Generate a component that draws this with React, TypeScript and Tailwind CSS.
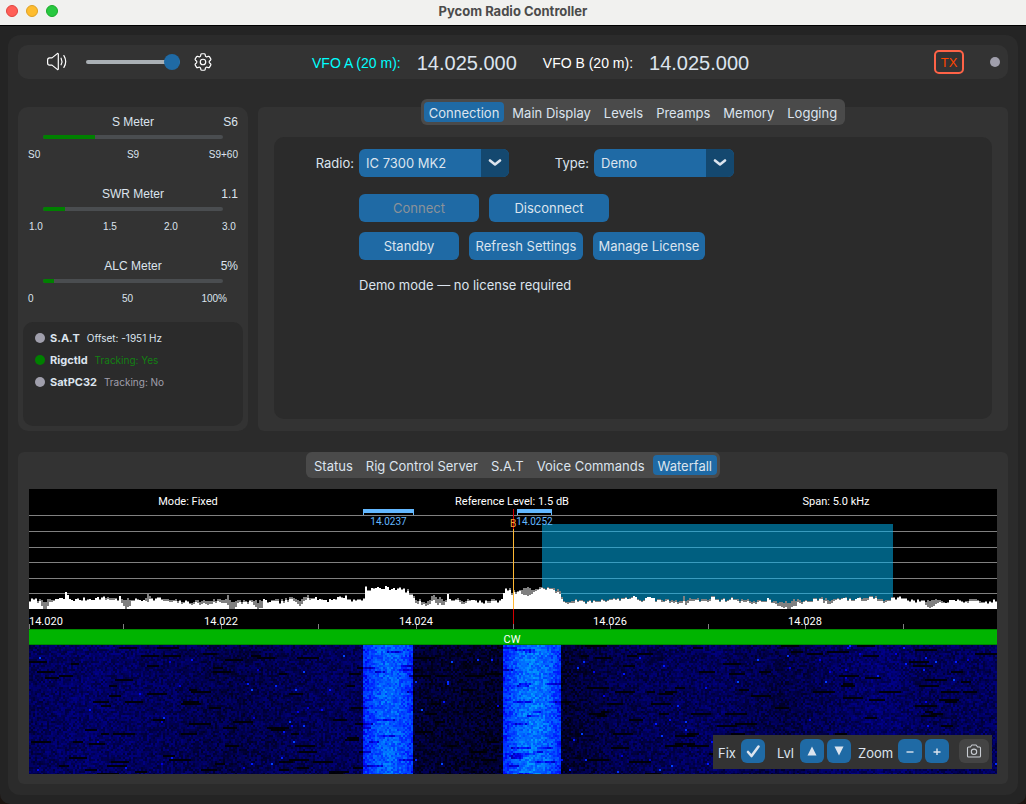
import { useEffect, useRef, useState } from "react";
import { HiOutlineCog6Tooth } from "react-icons/hi2";

const SCOPE_WIDTH = 968;
const WATERFALL_HEIGHT = 129;
const BASELINE = 120;

// [x, level, peak hold]
const TRACE: [number, number, number][] = [
  [0, 8, 9], [6, 9, 10], [11, 6, 9], [13, 0, 9], [17, 0, 8], [20, 5, 8], [26, 10, 10], [34, 10, 10],
  [36, 17, 17], [39, 11, 11], [41, 9, 9], [54, 9, 10], [71, 11, 11], [78, 10, 12], [88, 9, 10],
  [90, 14, 14], [92, 5, 9], [96, 0, 9], [99, 0, 9], [102, 9, 10], [115, 9, 9], [118, 9, 18], [121, 9, 10],
  [130, 10, 11], [138, 7, 9], [161, 6, 7], [178, 5, 9], [188, 7, 9], [197, 6, 10], [198, 5, 15],
  [201, 0, 8], [206, 1, 7], [209, 6, 8], [221, 7, 8], [227, 0, 8], [232, 1, 8], [234, 8, 8],
  [251, 6, 8], [262, 9, 11], [270, 4, 9], [274, 10, 14], [284, 10, 11], [298, 9, 9], [315, 12, 13],
  [321, 8, 9], [332, 9, 10], [334, 11, 12], [335, 22, 23], [338, 19, 20], [348, 21, 21], [361, 21, 21],
  [374, 19, 20], [382, 14, 16], [385, 7, 10], [391, 6, 8], [398, 4, 8], [403, 8, 13], [412, 4, 10],
  [417, 8, 9], [418, 14, 14], [421, 9, 9], [432, 6, 9], [444, 8, 8], [457, 6, 8], [473, 9, 9],
  [475, 20, 20], [479, 18, 20], [483, 15, 17], [490, 17, 18], [493, 14, 20], [498, 12, 21],
  [503, 17, 20], [511, 20, 21], [521, 20, 21], [524, 18, 20], [531, 14, 17], [533, 7, 8], [543, 6, 8],
  [547, 9, 10], [552, 6, 7], [568, 8, 9], [594, 10, 11], [604, 12, 12], [611, 8, 9], [618, 11, 11],
  [628, 8, 9], [641, 7, 9], [652, 7, 9], [653, 7, 12], [656, 6, 10], [665, 9, 10], [674, 7, 9],
  [684, 11, 12], [690, 8, 9], [704, 10, 11], [713, 7, 9], [728, 6, 8], [738, 9, 9], [747, 4, 7],
  [756, 0, 6], [763, 1, 8], [768, 6, 9], [776, 7, 8], [789, 10, 11], [799, 5, 9], [807, 9, 10],
  [813, 12, 12], [821, 8, 9], [828, 11, 11], [835, 8, 11], [841, 12, 13], [854, 8, 10], [864, 10, 11],
  [873, 11, 12], [881, 8, 9], [894, 7, 8], [899, 0, 8], [905, 2, 8], [909, 6, 8], [920, 8, 8],
  [941, 7, 9], [954, 6, 7], [968, 8, 9],
];

// [x, noise floor]
const FLOOR: [number, number][] = [
  [0, 0.34], [60, 0.4], [150, 0.34], [200, 0.28], [290, 0.34], [334, 0.34], [384, 0.2], [475, 0.17],
  [532, 0.18], [590, 0.31], [690, 0.36], [750, 0.27], [800, 0.34], [850, 0.42], [900, 0.34], [968, 0.36],
];

const GRID_LINES = [26, 42, 58, 73, 89, 104];

const TICKS = [
  { x: 0, label: "14.020" },
  { x: 94 },
  { x: 192, label: "14.022" },
  { x: 289 },
  { x: 387, label: "14.024" },
  { x: 484 },
  { x: 581, label: "14.026" },
  { x: 679 },
  { x: 776, label: "14.028" },
  { x: 874 },
];

const SIGNALS = [
  { x: 334, width: 51, label: "14.0237" },
  { x: 488, width: 35, label: "14.0252" },
];

function createRandom(seed: number) {
  let state = seed;
  return () => {
    state = (state * 1664525 + 1013904223) >>> 0;
    return state / 4294967296;
  };
}

function buildTrace(column: 1 | 2) {
  const random = createRandom(7);
  let path = `M0 ${BASELINE}`;
  let i = 0;
  for (let x = 0; x < SCOPE_WIDTH; x += 2) {
    while (i < TRACE.length - 2 && TRACE[i + 1][0] <= x) i++;
    const from = TRACE[i];
    const to = TRACE[i + 1];
    const ratio = (x - from[0]) / (to[0] - from[0]);
    const level = from[column] + (to[column] - from[column]) * ratio;
    const height = Math.max(0, Math.round(level + (random() - 0.5) * 3.4));
    path += `V${BASELINE - height}H${x + 2}`;
  }
  return `${path}V${BASELINE}Z`;
}

const LIVE_PATH = buildTrace(1);
const PEAK_PATH = buildTrace(2);

function floorLevel(x: number) {
  const i = Math.max(1, FLOOR.findIndex((point) => point[0] > x));
  const from = FLOOR[i - 1];
  const to = FLOOR[i];
  return from[1] + ((to[1] - from[1]) * (x - from[0])) / (to[0] - from[0]);
}

function signalLevel(x: number) {
  if (x >= 334 && x < 384) return 1.04 + 0.27 * Math.sin(((x - 334) / 50) * Math.PI);
  if (x >= 474 && x < 532) return 1.04 + 0.36 * Math.sin(((x - 474) / 58) * Math.PI);
  return 0;
}

function Waterfall() {
  const canvasRef = useRef<HTMLCanvasElement>(null);

  useEffect(() => {
    const context = canvasRef.current?.getContext("2d");
    if (!context) return;
    const random = createRandom(42);
    for (let y = 0; y < WATERFALL_HEIGHT; y += 2) {
      let fade = 0;
      for (let x = 0; x < SCOPE_WIDTH; x += 2) {
        const signal = signalLevel(x);
        if (fade > 0) fade--;
        else if (random() < 0.007) fade = 4 + Math.floor(random() * 8);
        let level = signal ? signal + (random() - 0.5) * 0.36 : floorLevel(x) + (random() - 0.5) * 0.3;
        if (!signal && random() < 0.004) level = 0.8 + random() * 0.4;
        if (fade > 0) level = signal ? level - 0.35 : level * 0.1;
        const blue = Math.max(0, Math.min(255, Math.round(level * 255)));
        const green = Math.max(0, Math.min(220, Math.round((level - 0.9) * 240)));
        context.fillStyle = `rgb(0, ${green}, ${blue})`;
        context.fillRect(x, y, 2, 2);
      }
    }
  }, []);

  return (
    <canvas
      ref={canvasRef}
      width={SCOPE_WIDTH}
      height={WATERFALL_HEIGHT}
      className="block w-full [image-rendering:pixelated]"
    />
  );
}

function Scope() {
  return (
    <svg viewBox="0 0 968 156" className="block w-full bg-black font-['Roboto',sans-serif]" shapeRendering="crispEdges">
      {GRID_LINES.map((y) => (
        <rect key={y} x="0" y={y} width="968" height="1" fill="#808080" />
      ))}
      <rect x="513" y="35" width="351" height="85" fill="#005f80" />
      {GRID_LINES.slice(1).map((y) => (
        <rect key={y} x="513" y={y} width="351" height="1" fill="#3a9cbf" />
      ))}
      <path d={PEAK_PATH} fill="#808080" />
      <path d={LIVE_PATH} fill="#ffffff" />

      <rect x="484" y="20" width="1" height="120" fill="#d40000" />
      <rect x="484" y="40" width="1" height="80" fill="#ffb733" />
      {SIGNALS.map((signal) => (
        <g key={signal.label}>
          <rect x={signal.x} y="20" width={signal.width} height="7" fill="#63b8ff" />
          <rect x={signal.x + 1} y="24" width={signal.width - 2} height="3" fill="#000000" />
          <rect x={signal.x} y="26" width={signal.width} height="1" fill="#808080" />
          <text x={signal.x + signal.width / 2} y="36" textAnchor="middle" fontSize="10" fill="#63b8ff">
            {signal.label}
          </text>
        </g>
      ))}
      <text x="484" y="38" textAnchor="middle" fontSize="10" fill="#ffa033">B</text>

      <g fontSize="11" fill="#ffffff" textAnchor="middle">
        <text x="159" y="16">Mode: Fixed</text>
        <text x="483" y="16">Reference Level: 1.5 dB</text>
        <text x="807" y="16">Span: 5.0 kHz</text>
      </g>

      {TICKS.map((tick) => (
        <g key={tick.x}>
          <rect x={tick.x} y="135" width="1" height="5" fill="#808080" />
          {tick.label && (
            <text
              x={tick.x}
              y="136"
              textAnchor={tick.x === 0 ? "start" : "middle"}
              fontSize="11"
              fill="#ffffff"
            >
              {tick.label}
            </text>
          )}
        </g>
      ))}

      <rect x="0" y="140" width="968" height="16" fill="#008a00" />
      <rect x="0" y="141" width="968" height="14" fill="#00b400" />
      <text x="483" y="154" textAnchor="middle" fontSize="11" fill="#ffffff">CW</text>
    </svg>
  );
}

function SpeakerIcon() {
  return (
    <svg
      width="22"
      height="22"
      viewBox="0 0 22 22"
      fill="none"
      stroke="#ffffff"
      strokeWidth="1.2"
      strokeLinecap="round"
      strokeLinejoin="round"
      className="mr-[18px]"
    >
      <path d="M3.6 6.9H6L11.3 2.6C11.7 2.3 12.3 2.5 12.3 3.1V17.9C12.3 18.5 11.7 18.7 11.3 18.4L6 14.1H3.6C2.4 14.1 1.6 13.2 1.6 12V9C1.6 7.8 2.4 6.9 3.6 6.9Z" />
      <path d="M15.1 7.2Q16.8 10.5 15.1 13.8" />
      <path d="M17.9 4.6Q21.5 10.5 17.9 16.4" />
    </svg>
  );
}

function CameraIcon() {
  return (
    <svg
      width="16"
      height="16"
      viewBox="0 0 16 16"
      fill="none"
      stroke="#c9cdd3"
      strokeWidth="1.1"
      strokeLinejoin="round"
    >
      <path d="M2.5 4H4.4L5.9 2H10.1L11.6 4H13.5C14.1 4 14.5 4.4 14.5 5V13C14.5 13.6 14.1 14 13.5 14H2.5C1.9 14 1.5 13.6 1.5 13V5C1.5 4.4 1.9 4 2.5 4Z" />
      <circle cx="8" cy="8.8" r="2.7" />
    </svg>
  );
}

interface TabBarProps {
  label: string;
  tabs: string[];
  initial: string;
}

function TabBar({ label, tabs, initial }: TabBarProps) {
  const [active, setActive] = useState(initial);
  return (
    <div role="tablist" aria-label={label} className="mx-auto -mt-2 flex w-fit gap-[3px] rounded-md bg-[#4a4a4a] p-[3px]">
      {tabs.map((tab) => (
        <button
          key={tab}
          type="button"
          role="tab"
          aria-selected={tab === active}
          onClick={() => setActive(tab)}
          className={`h-5 rounded px-[5px] pt-[2px] text-[13px] leading-[18px] ${tab === active ? "bg-[#1f6aa5]" : ""}`}
        >
          {tab}
        </button>
      ))}
    </div>
  );
}

interface MeterProps {
  title: string;
  value: string;
  percent: number;
  scale: string[];
  scaleClass: string;
}

function Meter({ title, value, percent, scale, scaleClass }: MeterProps) {
  return (
    <div className="font-['Liberation_Sans',sans-serif]">
      <div className="grid grid-cols-[1fr_auto_1fr] px-[10px] text-xs leading-4">
        <span />
        <span>{title}</span>
        <span className="text-right">{value}</span>
      </div>
      <div className="mx-[25px] mt-[5px] h-1 overflow-hidden rounded-sm bg-[#4a4d50]">
        <div className="h-full bg-[#008000]" style={{ width: `${percent}%` }} />
      </div>
      <div className={`mt-[10px] grid text-[10px] leading-3 ${scaleClass}`}>
        {scale.map((mark) => (
          <span key={mark}>{mark}</span>
        ))}
      </div>
    </div>
  );
}

interface ServiceProps {
  name: string;
  detail: string;
  dotClass: string;
  detailClass: string;
}

function Service({ name, detail, dotClass, detailClass }: ServiceProps) {
  return (
    <li className="flex h-[22px] items-center">
      <span className={`mr-[5px] h-[10px] w-[10px] rounded-full ${dotClass}`} />
      <span className="mr-[7px] text-[11px] font-bold">{name}</span>
      <span className={`text-[10px] ${detailClass}`}>{detail}</span>
    </li>
  );
}

interface ComboProps {
  id: string;
  options: string[];
  widthClass: string;
}

function Combo({ id, options, widthClass }: ComboProps) {
  return (
    <div className={`relative ${widthClass}`}>
      <select id={id} className="block h-7 w-full appearance-none rounded-md bg-[#1f6aa5] pl-[7px] pr-8 pt-[2px] text-[13px]">
        {options.map((option) => (
          <option key={option}>{option}</option>
        ))}
      </select>
      <span className="pointer-events-none absolute inset-y-0 right-0 flex w-7 items-center justify-center rounded-r-md bg-[#14486f]">
        <svg width="14" height="8" viewBox="0 0 14 8" fill="none" stroke="#dce4ee" strokeWidth="2.6" strokeLinecap="round" strokeLinejoin="round">
          <path d="M2 1.5L7 5.5L12 1.5" />
        </svg>
      </span>
    </div>
  );
}

const actionButton = "h-7 rounded-md bg-[#1f6aa5] pt-[2px] text-[13px]";
const toolButton = "flex h-6 w-6 items-center justify-center rounded-md bg-[#1f6aa5]";

export default function App() {
  const [volume, setVolume] = useState(100);
  const [fixed, setFixed] = useState(true);

  return (
    <div className="min-h-screen bg-[#1c1511] font-['Inter',sans-serif] text-[#dce4ee]">
      <div className="flex min-h-screen flex-col rounded-b-[10px] bg-[#242424]">
        <header className="relative flex h-[26px] items-center justify-center border-b border-black bg-[#f1f1ef]">
          <div className="absolute left-[6px] top-[5px] flex gap-2">
            <span className="h-3 w-3 rounded-full border border-[#e0443e] bg-[#ff5f57]" />
            <span className="h-3 w-3 rounded-full border border-[#dea123] bg-[#febc2e]" />
            <span className="h-3 w-3 rounded-full border border-[#1aab29] bg-[#28c840]" />
          </div>
          <h1 className="mb-1 text-[13px] font-bold leading-4 text-[#4b4b4b]">Pycom Radio Controller</h1>
        </header>

        <main className="mx-2 mb-[9px] mt-[9px] flex-1 rounded-xl bg-[#2b2b2b] p-[10px]">
          <section className="flex h-[34px] items-center rounded-[10px] bg-[#333333] pl-7 pr-2">
            <SpeakerIcon />
            <input
              type="range"
              aria-label="Volume"
              value={volume}
              onChange={(e) => setVolume(Number(e.target.value))}
              className="h-4 w-[94px] appearance-none bg-transparent [&::-webkit-slider-runnable-track]:h-1 [&::-webkit-slider-runnable-track]:rounded-full [&::-webkit-slider-runnable-track]:bg-[#aab0b5] [&::-webkit-slider-thumb]:-mt-[6px] [&::-webkit-slider-thumb]:h-4 [&::-webkit-slider-thumb]:w-4 [&::-webkit-slider-thumb]:appearance-none [&::-webkit-slider-thumb]:rounded-full [&::-webkit-slider-thumb]:bg-[#1f6aa5]"
            />
            <button type="button" aria-label="Settings" className="ml-3 text-white">
              <HiOutlineCog6Tooth strokeWidth={1.3} className="h-[22px] w-[22px]" />
            </button>
            <div className="ml-[98px] flex items-center pt-[2px] font-['Liberation_Sans',sans-serif]">
              <span className="mr-4 text-sm text-[#00ffff]">VFO A (20 m):</span>
              <span className="mr-[26px] text-xl">14.025.000</span>
              <span className="mr-4 text-sm text-white">VFO B (20 m):</span>
              <span className="text-xl">14.025.000</span>
            </div>
            <button
              type="button"
              className="ml-auto h-6 w-[30px] rounded-[5px] border-2 border-[#ff6347] pt-[2px] font-['Liberation_Sans',sans-serif] text-[13px] leading-[18px] text-[#ff4500]"
            >
              TX
            </button>
            <span className="ml-[26px] h-[10px] w-[10px] rounded-full bg-[#a09fac]" />
          </section>

          <div className="mt-7 flex h-[324px] gap-[10px]">
            <aside className="flex w-[230px] flex-col rounded-[10px] bg-[#333333] p-[5px] pt-[7px]">
              <div className="-mx-[5px] flex flex-col gap-[25px]">
                <Meter
                  title="S Meter"
                  value="S6"
                  percent={29}
                  scale={["S0", "S9", "S9+60"]}
                  scaleClass="grid-cols-[1fr_auto_1fr] px-[10px] [&>:last-child]:text-right"
                />
                <Meter
                  title="SWR Meter"
                  value="1.1"
                  percent={12}
                  scale={["1.0", "1.5", "2.0", "3.0"]}
                  scaleClass="grid-cols-[74px_61px_58px_auto] pl-[11px]"
                />
                <Meter
                  title="ALC Meter"
                  value="5%"
                  percent={6}
                  scale={["0", "50", "100%"]}
                  scaleClass="grid-cols-[1fr_auto_1fr] pl-[10px] pr-[21px] [&>:last-child]:text-right"
                />
              </div>
              <ul className="mt-auto h-[104px] rounded-[10px] bg-[#2b2b2b] px-3 py-[5px]">
                <Service name="S.A.T" detail="Offset: -1951 Hz" dotClass="bg-[#a09fac]" detailClass="text-[#dce4ee]" />
                <Service name="Rigctld" detail="Tracking: Yes" dotClass="bg-[#008000]" detailClass="text-[#138013]" />
                <Service name="SatPC32" detail="Tracking: No" dotClass="bg-[#a09fac]" detailClass="text-[#a09fac]" />
              </ul>
            </aside>

            <section className="flex flex-1 flex-col rounded-md bg-[#333333] px-4 pb-3">
              <TabBar
                label="Radio settings"
                tabs={["Connection", "Main Display", "Levels", "Preamps", "Memory", "Logging"]}
                initial="Connection"
              />
              <div className="mt-3 flex-1 rounded-[10px] bg-[#2b2b2b] pt-3 text-[13px]">
                <div className="flex items-center">
                  <label htmlFor="radio" className="w-[85px] pr-[5px] pt-[2px] text-right">Radio:</label>
                  <Combo id="radio" options={["IC 7300 MK2"]} widthClass="w-[150px]" />
                  <label htmlFor="type" className="w-[85px] pr-[5px] pt-[2px] text-right">Type:</label>
                  <Combo id="type" options={["Demo"]} widthClass="w-[140px]" />
                </div>
                <div className="mt-[17px] flex gap-[10px] pl-[85px]">
                  <button type="button" disabled className={`${actionButton} w-[120px] text-[#8c9299]`}>Connect</button>
                  <button type="button" className={`${actionButton} w-[120px]`}>Disconnect</button>
                </div>
                <div className="mt-[10px] flex gap-[10px] pl-[85px]">
                  <button type="button" className={`${actionButton} w-[100px]`}>Standby</button>
                  <button type="button" className={`${actionButton} w-[114px]`}>Refresh Settings</button>
                  <button type="button" className={`${actionButton} w-[112px]`}>Manage License</button>
                </div>
                <p className="mt-[15px] pl-[85px] leading-5">Demo mode — no license required</p>
              </div>
            </section>
          </div>

          <section className="mt-[29px] rounded-md bg-[#333333] px-[11px] pb-[10px]">
            <TabBar
              label="Activity"
              tabs={["Status", "Rig Control Server", "S.A.T", "Voice Commands", "Waterfall"]}
              initial="Waterfall"
            />
            <div className="relative mt-[11px]">
              <Scope />
              <Waterfall />
              <div className="absolute bottom-[5px] right-[5px] flex h-[34px] w-[279px] items-start bg-[#333333] px-[3px] pt-1 text-[13px] leading-7">
                <label htmlFor="fix" className="ml-[2px] w-[23px]">Fix</label>
                <span className="relative">
                  <input
                    id="fix"
                    type="checkbox"
                    checked={fixed}
                    onChange={(e) => setFixed(e.target.checked)}
                    className="block h-6 w-6 appearance-none rounded-md bg-[#1f6aa5]"
                  />
                  {fixed && (
                    <svg className="pointer-events-none absolute inset-0" width="24" height="24" viewBox="0 0 24 24" fill="none" stroke="#dce4ee" strokeWidth="2.6" strokeLinecap="round" strokeLinejoin="round">
                      <path d="M7 13L10.5 17L17.5 7.5" />
                    </svg>
                  )}
                </span>
                <span className="ml-3 w-[23px]">Lvl</span>
                <button type="button" aria-label="Level up" className={toolButton}>
                  <svg width="10" height="10" viewBox="0 0 10 10" fill="#dce4ee"><path d="M5 0.5L9.5 9.5H0.5Z" /></svg>
                </button>
                <button type="button" aria-label="Level down" className={`${toolButton} ml-[3px]`}>
                  <svg width="10" height="10" viewBox="0 0 10 10" fill="#dce4ee"><path d="M5 9.5L9.5 0.5H0.5Z" /></svg>
                </button>
                <span className="ml-[7px] w-10">Zoom</span>
                <button type="button" aria-label="Zoom out" className={toolButton}>
                  <svg width="8" height="8" viewBox="0 0 8 8" stroke="#dce4ee" strokeWidth="1.4"><path d="M0.5 5H7.5" /></svg>
                </button>
                <button type="button" aria-label="Zoom in" className={`${toolButton} ml-[3px]`}>
                  <svg width="8" height="8" viewBox="0 0 8 8" stroke="#dce4ee" strokeWidth="1.4"><path d="M0.5 5H7.5M4 1.5V8" /></svg>
                </button>
                <button type="button" aria-label="Take snapshot" className="ml-[10px] flex h-6 w-[30px] items-center justify-center rounded-md bg-[#444444]">
                  <CameraIcon />
                </button>
              </div>
            </div>
          </section>
        </main>
      </div>
    </div>
  );
}
